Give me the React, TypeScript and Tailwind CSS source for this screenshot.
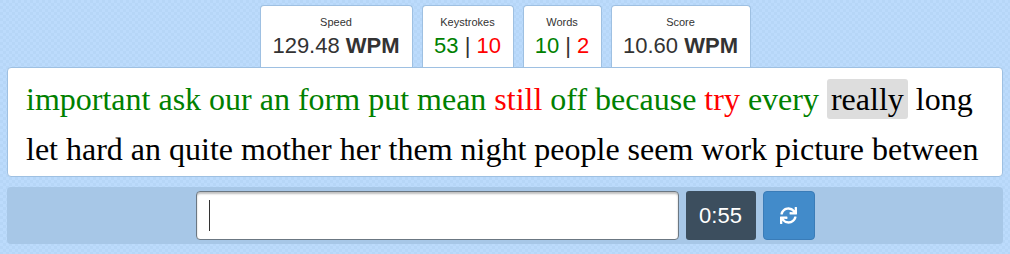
import { FaSync } from "react-icons/fa";

type Word = { text: string; state: "ok" | "bad" | "current" | "todo" };

const line1: Word[] = [
  { text: "important", state: "ok" },
  { text: "ask", state: "ok" },
  { text: "our", state: "ok" },
  { text: "an", state: "ok" },
  { text: "form", state: "ok" },
  { text: "put", state: "ok" },
  { text: "mean", state: "ok" },
  { text: "still", state: "bad" },
  { text: "off", state: "ok" },
  { text: "because", state: "ok" },
  { text: "try", state: "bad" },
  { text: "every", state: "ok" },
  { text: "really", state: "current" },
  { text: "long", state: "todo" },
];

const line2 = "let hard an quite mother her them night people seem work picture between";

function wordClass(state: Word["state"]) {
  if (state === "ok") return "text-[#008000]";
  if (state === "bad") return "text-[#ff0000]";
  if (state === "current") return "inline-block bg-[#dddddd] rounded-[3px] px-[4px] leading-[40px] text-black";
  return "text-black";
}

function StatCard({ label, width, children }: { label: string; width: string; children: React.ReactNode }) {
  return (
    <div className={`${width} h-[62px] bg-white border border-b-0 border-[#9ec0e2] rounded-t-[4px] flex flex-col items-center`}>
      <div className="text-[11px] text-[#333] mt-[9px] leading-[14px]">{label}</div>
      <div className="text-[22px] text-[#333] mt-[4px] leading-[26px] whitespace-nowrap">{children}</div>
    </div>
  );
}

export default function App() {
  return (
    <div className="w-[1010px] h-[254px] bg-[#bad9fa] bg-[repeating-conic-gradient(#bcdbfc_0_25%,#b6d6f7_0_50%)] bg-[length:6px_6px] overflow-hidden font-['Liberation_Sans',Arial,sans-serif]">
      <div className="flex justify-center gap-[9px] pt-[5px]">
        <StatCard label="Speed" width="w-[153px]">
          129.48 <b>WPM</b>
        </StatCard>
        <StatCard label="Keystrokes" width="w-[92px]">
          <span className="text-[#008000]">53</span> | <span className="text-[#ff0000]">10</span>
        </StatCard>
        <StatCard label="Words" width="w-[79px]">
          <span className="text-[#008000]">10</span> | <span className="text-[#ff0000]">2</span>
        </StatCard>
        <StatCard label="Score" width="w-[140px]">
          10.60 <b>WPM</b>
        </StatCard>
      </div>

      <div className="mx-[7px] h-[110px] bg-white border border-[#9ec0e2] rounded-[4px] px-[18px] pt-[6px] font-['Liberation_Serif','Times_New_Roman',serif] text-[32px] leading-[50px] whitespace-nowrap">
        <div>
          {line1.map((w, i) => (
            <span key={i}>
              <span className={wordClass(w.state)}>{w.text}</span>
              {i < line1.length - 1 ? " " : ""}
            </span>
          ))}
        </div>
        <div className="text-black">{line2}</div>
      </div>

      <div className="mx-[7px] mt-[10px] h-[57px] bg-[#a7c7e7] rounded-[4px] flex justify-center items-center gap-[7px]">
        <div className="w-[483px] h-[49px] bg-white border border-[#6b7782] rounded-[4px] shadow-[inset_0_2px_2px_rgba(0,0,0,0.25)] flex items-center pl-[12px]">
          <div className="w-[1px] h-[31px] bg-[#333]" />
        </div>
        <div className="w-[70px] h-[49px] bg-[#3c4e5e] rounded-[3px] text-white text-[22px] flex items-center justify-center">
          0:55
        </div>
        <div className="w-[52px] h-[49px] bg-[#428bca] border border-[#3a7cb8] rounded-[4px] text-white flex items-center justify-center">
          <FaSync className="w-[17px] h-[17px]" />
        </div>
      </div>
    </div>
  );
}
